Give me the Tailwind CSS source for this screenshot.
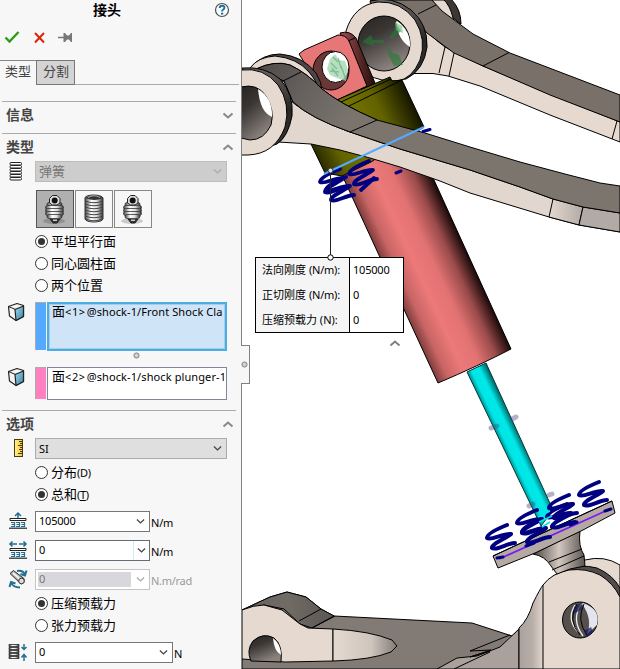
<!DOCTYPE html>
<html lang="zh-CN">
<head>
<meta charset="utf-8">
<title>接头</title>
<script src="https://cdn.jsdelivr.net/npm/@tailwindcss/browser@4"></script>
</head>
<body class="w-[620px] h-[669px] overflow-hidden bg-white flex text-black font-['Noto_Sans','Noto_Sans_CJK_SC',sans-serif] text-[11px] leading-none">
<svg class="absolute w-0 h-0" aria-hidden="true">
  <defs>
    <linearGradient id="metal"><stop offset="0" stop-color="#444"/><stop offset=".35" stop-color="#fff"/><stop offset=".65" stop-color="#ddd"/><stop offset="1" stop-color="#333"/></linearGradient>
    <linearGradient id="face" x1="0" y1="0" x2="1" y2="1"><stop offset="0" stop-color="#a8d8ea"/><stop offset="1" stop-color="#2f82a8"/></linearGradient>
    <radialGradient id="knob"><stop offset="0" stop-color="#ddd"/><stop offset="1" stop-color="#bbb"/></radialGradient>
    <symbol id="down" viewBox="0 0 12 8"><path d="M1.500 1.500 6 5.500l4.500-4" fill="none" stroke="currentColor" stroke-width="2"/></symbol>
    <symbol id="up" viewBox="0 0 12 8"><path d="M1.500 6.500 6 2.500l4.500 4" fill="none" stroke="currentColor" stroke-width="2"/></symbol>
    <symbol id="thin" viewBox="0 0 10 7"><path d="M1 1.200 5 5l4-3.800" fill="none" stroke="currentColor" stroke-width="1.400"/></symbol>
    <symbol id="cube" viewBox="0 0 18 20">
      <path d="M1.500 4.500 10 1.500l6.500 2V14.500L9 18.500 2.500 14Z" fill="#f4f4f4" stroke="#222" stroke-width="1.200" stroke-linejoin="round"/>
      <path d="M8 7.500 16.500 4v10.500L9 18.500Z" fill="url(#face)" stroke="#222" stroke-width="1.200" stroke-linejoin="round"/>
      <path d="M1.500 4.500l7 3" stroke="#222" fill="none"/>
    </symbol>
    <symbol id="hook" viewBox="0 0 38 38">
      <ellipse cx="18" cy="31" rx="11" ry="3" fill="#000" opacity=".18"/>
      <path d="M14 29h10l-3 4h-4Z" fill="#333" stroke="#222"/><path d="M17 29.500h4v1.500h-4Z" fill="#ccc"/>
      <g fill="url(#metal)" stroke="#333" stroke-width=".8"><rect x="11" y="12.500" width="15" height="4" rx="2"/><rect x="9.500" y="15.500" width="18" height="4" rx="2"/><rect x="9.500" y="18.500" width="18" height="4" rx="2"/><rect x="9.500" y="21.500" width="18" height="4" rx="2"/><rect x="11" y="24.500" width="15" height="4" rx="2"/></g>
      <path d="M13.500 13V8.500l3-3h4.500l3 3V13l-3 2h-4.500Z" fill="#ddd" stroke="#222"/><circle cx="18.700" cy="10.500" r="3" fill="#111"/>
    </symbol>
    <symbol id="coil" viewBox="0 0 38 38">
      <path d="M10 8c0-4 17-4 18 0v21c-1 4-17 4-18 0Z" fill="url(#metal)" stroke="#333"/>
      <path d="M10.500 8q9-6 17 0-8 4-17 0" fill="#333"/><path d="M13 7.500q6-3.500 12 0" fill="none" stroke="#aaa"/>
      <path d="M10 11q9 3.500 18 0M10 14q9 3.500 18 0M10 17q9 3.500 18 0M10 20q9 3.500 18 0M10 23q9 3.500 18 0M10 26q9 3.500 18 0M10 29q9 3.500 18 0" fill="none" stroke="#444"/>
    </symbol>
    <symbol id="ground" viewBox="0 0 18 12"><path d="M1 1.500h16v2H1z" fill="#fff" stroke="#222"/><path d="M2 5.500h3.500v4H2m.5-2h3M7 5.500h3.500v4H7m.5-2h3M12 5.500h3.500v4H12m.5-2h3" fill="none" stroke="#236f91" stroke-width="1.200"/><path d="M0 11.200h18" stroke="#222" stroke-width="1.200"/></symbol>
  </defs>
</svg>

<aside class="relative w-[242px] h-full shrink-0 bg-[#f7f7f7] border-r border-[#808080] flex flex-col z-10">
  <header class="h-[25px] flex items-start relative">
    <h1 class="w-[214px] text-center text-[14px] font-bold leading-[20px]">接头</h1>
    <svg class="w-[16px] h-[16px] mt-[2px] ml-0" viewBox="0 0 16 16"><circle cx="8" cy="8" r="6.500" fill="#f7fbfd" stroke="#4c5156" stroke-width="1.200"/><path d="M5.700 6q.2-2.300 2.400-2.300 2.300 0 2.300 2 0 1-1.200 1.800Q8.100 8.200 8.100 9.400" fill="none" stroke="#236f9b" stroke-width="1.900"/><path d="M7 10.700h2.200v1.900H7z" fill="#236f9b"/></svg>
  </header>
  <div class="h-[35px] pt-[4px] pl-[4px] flex items-start">
    <svg class="w-[72px] h-[16px]" viewBox="0 0 72 16"><path d="M1.500 8.500 5.500 12.500 14.500 3" fill="none" stroke="#2e9a12" stroke-width="2.300"/><path d="m31 4 9 9.500m0-9.500-9 9.500" stroke="#dc2408" stroke-width="2" fill="none"/><path d="M54 8.500h6" stroke="#777" stroke-width="1.500"/><path d="M59.500 4h1.500l2 2.500h2L67 4h1v9h-1l-2-2.500h-2L61 13h-1.500Z" fill="#777"/></svg>
  </div>
  <nav class="h-[25px] flex text-[13px] text-[#444] mr-[2px]">
    <div class="w-[36px] border-t border-[#888] pl-[5px] pt-[3px] leading-[15px] whitespace-nowrap">类型</div>
    <div class="w-[39px] border border-[#777] bg-[#d4d4d4] pl-[6px] pt-[3px] leading-[15px]">分割</div>
    <div class="flex-1 border-b border-[#aaa]"></div>
  </nav>
  <section class="h-[32px] mt-[16px] ml-[2px] mr-[5px] border-t border-[#aaa] flex justify-between items-start">
    <h2 class="text-[14px] font-bold text-[#444] leading-[18px] mt-[4px] ml-[4px]">信息</h2><svg class="w-[12px] h-[8px] mt-[10px] mr-[2px] text-[#888]"><use href="#down"/></svg>
  </section>
  <section class="h-[277px] flex flex-col">
    <div class="h-[28px] ml-[2px] mr-[5px] border-t border-[#aaa] flex justify-between items-start">
      <h2 class="text-[14px] font-bold text-[#444] leading-[18px] mt-[4px] ml-[4px]">类型</h2><svg class="w-[12px] h-[8px] mt-[9px] mr-[2px] text-[#888]"><use href="#up"/></svg>
    </div>
    <div class="flex h-[21px]">
      <svg class="w-[35px] h-[21px]" viewBox="0 0 35 21"><g fill="#fff" stroke="#222"><rect x="10" y="1.500" width="11.500" height="2.500" rx="1"/><rect x="10" y="4.500" width="11.500" height="2.500" rx="1"/><rect x="10" y="7.500" width="11.500" height="2.500" rx="1"/><rect x="10" y="10.500" width="11.500" height="2.500" rx="1"/><rect x="10" y="13.500" width="11.500" height="2.500" rx="1"/><rect x="10" y="16.500" width="11.500" height="2.500" rx="1"/></g></svg>
      <div class="w-[192px] border border-[#bcbcbc] bg-[#cdcdcd] flex items-center justify-between pl-[3px] pr-[4px] text-[13px] text-[#777]"><span>弹簧</span><svg class="w-[9px] h-[7px] text-[#aaa]"><use href="#thin"/></svg></div>
    </div>
    <div class="flex gap-[1px] pl-[36px] mt-[8px]">
      <div class="w-[38px] h-[38px] border border-[#555] bg-[#b0b0b0]"><svg class="w-[38px] h-[38px] -m-px"><use href="#hook"/></svg></div>
      <div class="w-[38px] h-[38px] border border-[#888]"><svg class="w-[38px] h-[38px] -m-px"><use href="#coil"/></svg></div>
      <div class="w-[38px] h-[38px] border border-[#888]"><svg class="w-[38px] h-[38px] -m-px"><use href="#hook"/></svg></div>
    </div>
    <div class="pl-[35px] mt-[2px] text-[13px]">
      <div class="h-[22px] flex items-center gap-[3px]"><i class="w-[13px] h-[13px] rounded-full border border-[#333] bg-white flex items-center justify-center"><b class="w-[7px] h-[7px] rounded-full bg-[#333]"></b></i><span>平坦平行面</span></div>
      <div class="h-[22px] flex items-center gap-[3px]"><i class="w-[13px] h-[13px] rounded-full border border-[#333] bg-white"></i><span>同心圆柱面</span></div>
      <div class="h-[22px] flex items-center gap-[3px]"><i class="w-[13px] h-[13px] rounded-full border border-[#333] bg-white"></i><span>两个位置</span></div>
    </div>
    <div class="flex h-[49px] mt-[6px]">
      <svg class="w-[18px] h-[20px] ml-[7px] mr-[10px]"><use href="#cube"/></svg>
      <div class="w-[11px] h-[48px] bg-[#55aaff] border border-[#aaa] border-r-0 border-b-0"></div>
      <div class="w-[180px] ml-[1px] border-2 border-[#4badE2] bg-[#d0e4f7] shadow-[inset_0_0_0_1px_#a5cdec] pl-[3px] leading-[14px] whitespace-nowrap overflow-hidden"><span class="text-[13px]">面</span><span class="tracking-[0.6px]">&lt;1&gt;</span><span class="tracking-[0.100px] ml-[1px]">@shock-1/Front Shock Cla</span></div>
    </div>
    <div class="h-[16px] pl-[133px] pt-[1px]"><svg class="w-[7px] h-[7px]" viewBox="0 0 7 7"><circle cx="3.500" cy="3.500" r="2.600" fill="url(#knob)" stroke="#888"/></svg></div>
    <div class="flex h-[33px]">
      <svg class="w-[18px] h-[20px] ml-[7px] mr-[10px]"><use href="#cube"/></svg>
      <div class="w-[11px] h-[32px] bg-[#ff80c0] border border-[#aaa] border-r-0 border-b-0"></div>
      <div class="w-[180px] ml-[1px] border border-[#81859b] bg-white pl-[4px] pt-px leading-[14px] whitespace-nowrap overflow-hidden"><span class="text-[13px]">面</span><span class="tracking-[0.6px]">&lt;2&gt;</span><span class="tracking-[0.100px] ml-[1px]">@shock-1/shock plunger-1</span></div>
    </div>
  </section>
  <section class="flex flex-col">
    <div class="h-[28px] ml-[2px] mr-[5px] border-t border-[#aaa] flex justify-between items-start">
      <h2 class="text-[14px] font-bold text-[#444] leading-[18px] mt-[4px] ml-[4px]">选项</h2><svg class="w-[12px] h-[8px] mt-[9px] mr-[2px] text-[#888]"><use href="#up"/></svg>
    </div>
    <div class="flex h-[21px]">
      <svg class="w-[35px] h-[21px]" viewBox="0 0 35 21"><defs><linearGradient id="gold"><stop offset="0" stop-color="#fff19b"/><stop offset="1" stop-color="#f8c928"/></linearGradient></defs><rect x="14.500" y="1.500" width="8" height="17" fill="url(#gold)" stroke="#4a3a10"/><path d="M22 3.500h-3M22 5.500h-2M22 7.500h-4M22 9.500h-2M22 11.500h-3M22 13.500h-2M22 15.500h-4" stroke="#4a3a10"/></svg>
      <div class="w-[192px] border border-[#acacac] bg-[#dfdfdf] flex items-center justify-between pl-[3px] pr-[4px]"><span>SI</span><svg class="w-[9px] h-[7px] text-[#444]"><use href="#thin"/></svg></div>
    </div>
    <div class="pl-[35px] mt-[2px] text-[13px]">
      <div class="h-[22px] flex items-center gap-[3px]"><i class="w-[13px] h-[13px] rounded-full border border-[#333] bg-white"></i><span class="whitespace-nowrap">分布<span class="text-[11px] tracking-[-0.300px]">(D)</span></span></div>
      <div class="h-[22px] flex items-center gap-[3px]"><i class="w-[13px] h-[13px] rounded-full border border-[#333] bg-white flex items-center justify-center"><b class="w-[7px] h-[7px] rounded-full bg-[#333]"></b></i><span class="whitespace-nowrap">总和<span class="text-[11px] tracking-[-0.300px]">(<u>T</u>)</span></span></div>
    </div>
    <div class="flex h-[21px] mt-[6px]">
      <svg class="w-[35px] h-[21px]" viewBox="0 0 35 21"><path d="M18 7V2.500m-3 2.500 3-3 3 3" fill="none" stroke="#236f91" stroke-width="1.500"/><use href="#ground" x="9" y="6" width="18" height="12"/></svg>
      <div class="w-[115px] border border-[#777] bg-white flex items-center justify-between pl-[3px] pr-[4px]"><span class="-mt-[2px] tracking-[-0.200px]">105000</span><svg class="w-[9px] h-[7px] text-[#444]"><use href="#thin"/></svg></div><span class="ml-[1px] mt-[6px] tracking-[-0.200px]">N/m</span>
    </div>
    <div class="flex h-[21px] mt-[8px]">
      <svg class="w-[35px] h-[21px]" viewBox="0 0 35 21"><path d="M10 4h7m2 0h7M12.500 1.500 10 4l2.500 2.500M23.500 1.500 26 4l-2.500 2.500" fill="none" stroke="#236f91" stroke-width="1.600"/><use href="#ground" x="9" y="7" width="18" height="12"/></svg>
      <div class="w-[115px] border border-[#626d75] bg-white flex items-center justify-between pl-[3px]"><span class="-mt-[2px]">0</span><span class="w-[16px] h-full border-l border-[#cceef5] flex items-center pl-[3px]"><svg class="w-[9px] h-[7px] text-[#444]"><use href="#thin"/></svg></span></div><span class="ml-[1px] mt-[6px] tracking-[-0.200px]">N/m</span>
    </div>
    <div class="flex h-[21px] mt-[8px] text-[#999]">
      <svg class="w-[35px] h-[21px]" viewBox="0 0 35 21"><path d="M10 4.500 13.500 1.500 24 9.500q1 5-3 5.500Z" fill="#aaa" stroke="#333"/><path d="m13 4 8 7" stroke="#f3f3f3" stroke-width="2.200"/><circle cx="21.500" cy="12" r="2.800" fill="#ddd" stroke="#333"/><path d="M17 2q6-1 8 3.500m1.500-4L25 6.500 20.500 5M20 18.500q-7 0-9-5m-1.500 4.500 1.500-5 4.500 1.500" fill="none" stroke="#236f91" stroke-width="2"/></svg>
      <div class="w-[115px] border border-[#c4c4c4] bg-white flex items-center justify-between pl-[2px] pr-[4px]"><span class="w-[93px] h-[15px] bg-[#d8d8dc] text-[#777] pl-[1px] leading-[14px]">0</span><svg class="w-[9px] h-[7px] text-[#aaa]"><use href="#thin"/></svg></div><span class="ml-[1px] mt-[6px] tracking-[-0.300px]">N.m/rad</span>
    </div>
    <div class="pl-[35px] mt-[2px] text-[13px]">
      <div class="h-[22px] flex items-center gap-[3px]"><i class="w-[13px] h-[13px] rounded-full border border-[#333] bg-white flex items-center justify-center"><b class="w-[7px] h-[7px] rounded-full bg-[#333]"></b></i><span>压缩预载力</span></div>
      <div class="h-[22px] flex items-center gap-[3px]"><i class="w-[13px] h-[13px] rounded-full border border-[#333] bg-white"></i><span>张力预载力</span></div>
    </div>
    <div class="flex h-[21px] mt-[6px]">
      <svg class="w-[35px] h-[21px]" viewBox="0 0 35 21"><g fill="url(#metal)" stroke="#222" stroke-width=".8"><path d="M9 2.500h10v2H9zm0 3h10v2H9zm0 3h10v2H9zm0 3h10v2H9zm0 3h10v2H9z"/></g><path d="M24 2v5m-2.500-2L24 7.500 26.500 5M24 19v-6m-2.500 2.500L24 12.500l2.500 3" stroke="#236f91" stroke-width="1.500" fill="none"/></svg>
      <div class="w-[138px] border border-[#777] bg-white flex items-center justify-between pl-[3px] pr-[4px]"><span class="-mt-[2px]">0</span><svg class="w-[9px] h-[7px] text-[#444]"><use href="#thin"/></svg></div><span class="ml-[1px] mt-[6px]">N</span>
    </div>
  </section>
  <div class="absolute left-[241px] top-[345px] w-[9px] h-[39px] bg-[#f7f7f7] border border-[#808080] border-l-0 flex items-center"><svg class="w-[7px] h-[7px]" viewBox="0 0 7 7"><circle cx="3.500" cy="3.500" r="2.600" fill="url(#knob)" stroke="#888"/></svg></div>
</aside>

<main class="relative flex-1 overflow-hidden">
  <svg class="block w-[378px] h-[669px]" viewBox="242 0 378 669" stroke-linejoin="round">
    <defs>
      <linearGradient id="olive" gradientUnits="userSpaceOnUse" x1="325" y1="173" x2="424" y2="127"><stop offset="0" stop-color="#2b2b00"/><stop offset=".2" stop-color="#636300"/><stop offset=".45" stop-color="#747400"/><stop offset=".7" stop-color="#626200"/><stop offset="1" stop-color="#151500"/></linearGradient>
      <linearGradient id="pink" gradientUnits="userSpaceOnUse" x1="437" y1="383" x2="511" y2="349"><stop offset="0" stop-color="#7a3a3a"/><stop offset=".15" stop-color="#c96565"/><stop offset=".36" stop-color="#ed7979"/><stop offset=".58" stop-color="#e27272"/><stop offset=".8" stop-color="#9b4b4b"/><stop offset="1" stop-color="#1c0a0a"/></linearGradient>
      <linearGradient id="cyan" gradientUnits="userSpaceOnUse" x1="501" y1="446" x2="522" y2="436"><stop offset="0" stop-color="#007a7a"/><stop offset=".25" stop-color="#00e5e5"/><stop offset=".6" stop-color="#00e8e8"/><stop offset="1" stop-color="#004b4b"/></linearGradient>
      <linearGradient id="lug"><stop offset="0" stop-color="#9d4e4e"/><stop offset="1" stop-color="#250d0d"/></linearGradient>
      <linearGradient id="bore" x1="0" y1="0" x2=".5" y2="1"><stop offset="0" stop-color="#262321"/><stop offset=".4" stop-color="#393634"/><stop offset="1" stop-color="#8a827d"/></linearGradient>
      <linearGradient id="arm" gradientUnits="userSpaceOnUse" x1="250" y1="65" x2="345" y2="125"><stop offset="0" stop-color="#4b4745"/><stop offset=".5" stop-color="#65605d"/><stop offset="1" stop-color="#7a746d"/></linearGradient>
      <linearGradient id="bend"><stop offset="0" stop-color="#e5d9d0"/><stop offset="1" stop-color="#b2aaa4"/></linearGradient>
      <linearGradient id="pocket"><stop offset="0" stop-color="#e5d9d0"/><stop offset=".6" stop-color="#cfc5bd"/><stop offset="1" stop-color="#837a75"/></linearGradient>
      <linearGradient id="neck"><stop offset="0" stop-color="#4b4643"/><stop offset=".5" stop-color="#d3c7bf"/><stop offset="1" stop-color="#5b5450"/></linearGradient>
      <linearGradient id="corner"><stop offset="0" stop-color="#aaa19d"/><stop offset=".35" stop-color="#b8aea8"/><stop offset=".6" stop-color="#ddd1c9"/><stop offset="1" stop-color="#e5d9d0"/></linearGradient>
      <linearGradient id="hump"><stop offset="0" stop-color="#67625e"/><stop offset=".5" stop-color="#716b66"/><stop offset="1" stop-color="#5b5652"/></linearGradient>
      <linearGradient id="rim" x1="0" y1="0" x2="0" y2="1"><stop offset="0" stop-color="#6b6562"/><stop offset=".5" stop-color="#272524"/><stop offset="1" stop-color="#3a3634"/></linearGradient>
      <path id="spring" d="M22 1C12 5 2 10 2 14 6 17 18 9 26 10 22 14 6 20 7 24 12 27 22 19 30 19"/>
    </defs>

    <!-- upper arm -->
    <g stroke="#000" stroke-width="1">
      <path d="M425 0h21q12 9 14 25L425 14Z" fill="#e5d9d0"/>
      <path d="M443-1h8q10 10 10 25l-8-6Q450 5 443-1Z" fill="#3a3735"/>
      <path d="M418 20Q427 34 445 47L483 66 550 94 620 122V142L550 115 480 86 448 76 433 73.500H395Z" fill="#e5d9d0"/>
      <path d="M370 0H432L442 11 473 34 510 53 620 95V122L550 95 483 66 454 53 427 33 405 6Z" fill="#797169"/>
      <path d="M509 52.500 483 66M436 5 418 14M445 47 439 73M454 53 449 76M617 121 612 139" fill="none"/>
      <path d="M370 1Q392-5 411 10 428 24 427 47 424 70 406 79L388 81Z" fill="url(#rim)"/>
      <path d="M346 31Q354 5 378 2 401 1 415 20 427 40 420 60 412 79 397 81 363 82 350 55 346 43 346 31Z" fill="#e5d9d0"/>
      <ellipse cx="384" cy="43.500" rx="26" ry="27.500" fill="url(#bore)"/>
    </g>
    <path d="M397 21Q411 31 410 47 398 40 396 22Z" fill="#fff"/>
    <path d="m362 42 9-7 2 5 11 0v3h-11l1 3ZM387 44l5 9 7 2 4 10-9 1-5-10ZM389 38l6-9 0-7 6 9-8 7Z" fill="#257b35" opacity=".6"/>
    <path d="m395 22 7 4 1 7-7-3Z" fill="#68bd7c" opacity=".6"/>

    <!-- eye bracket -->
    <g stroke="#000">
      <path d="M340 33Q350 30 356 38L375 83 362 90 345 44Z" fill="url(#lug)"/>
      <path d="M299 54 304 50 338 35Q346 35 349 41L367 86 337 100 322 91Z" fill="#e77777"/>
      <path d="M348 41 355 38" fill="none"/>
      <ellipse cx="331" cy="70.500" rx="18" ry="19.500" fill="#683838"/>
      <ellipse cx="335.500" cy="67" rx="13.500" ry="15.500" fill="#fff"/>
    </g>
    <path d="m327 69 3-10 5-5 4 6 6 1 3 9-2 11-9-3-7-3Z" fill="#9ed5ac" opacity=".75"/><path d="m331 63 6 6m1-11 3 10m-9 0 6 8m3-10 4 11m-15-6 9 1m-6-15 5 5" stroke="#62a873" stroke-width="1.500" opacity=".6"/>

    <!-- collar and body -->
    <g stroke="#000">
      <path d="M342 175 371 150 422 150 434 180 511 349Q478 366 438 383Z" fill="url(#pink)"/>
      <path d="M337 100 390 77 392 81 402 80 424 127 371 162 342 176 325 173 311 144Z" fill="url(#olive)"/>
      <path d="M349 106 402 80M341 102 391 79" fill="none"/>
    </g>

    <!-- lower arm -->
    <g stroke="#000">
      <path d="M250 68Q262 54 280 54 303 56 316 73 322 82 322 92L300 100 260 80Z" fill="#4b4643"/>
      <path d="M250 68Q258 57 275 56 297 58 309 72 318 83 319 91L290 90Z" fill="#e5d9d0"/>
      <path d="M287 97Q300 112 350 132L400 149 470 170 520 187 553 199 583 207 620 213V232L579 225 549 217 470 193 440 181 400 167 370 158 340 150 311 144 278 142Z" fill="#e2d7ce"/>
      <path d="M553 199 583 207 579 225 549 217Z" fill="url(#bend)"/><path d="M583 207 620 213V232L579 225Z" fill="#b2aaa4"/>
      <path d="M256 69Q275 60 290 65 307 73 322 89 340 104 377 120L425 133 470 147 520 162 565 174 600 183 620 186V213L583 207 553 199 520 187 470 170 400 149 350 132Q310 118 293 102L284 81Z" fill="#7c756e"/>
      <path d="M256 69Q275 60 290 65 307 73 322 89 340 104 377 120L350 132Q310 118 293 102L284 81Z" fill="url(#arm)"/>
      <path d="M301 72 281 82" fill="none"/>
      <path d="M242 68Q265 66 280 79 294 94 292 116 288 137 277 144L260 150Z" fill="url(#rim)"/>
      <path d="M241 70Q264 67 278 85 291 104 285 127 275 154 248 155H241Z" fill="#e5d9d0"/>
      <path d="M241 87Q257 83 266 96 275 110 271 125 264 140 250 140L241 138Z" fill="url(#bore)"/>
      <path d="M258 89Q273 98 272 117 260 112 258 89Z" fill="#fff" stroke="none"/>
    </g>

    <!-- spring symbols under the collar -->
    <g fill="none" stroke="#000080" stroke-width="3.800" stroke-linecap="round">
      <use href="#spring" x="318" y="168"/><use href="#spring" x="324" y="176"/><use href="#spring" x="347" y="160"/>
      <path d="M374 178 361 190"/>
      <path d="m396 173 5-2M423 131.500l7-2" stroke-width="3"/>
    </g>
    <path d="m324 174 100-47" stroke="#55aaff" stroke-width="2"/>

    <!-- rod -->
    <path d="M467 372 486 363 553 510 541 526Z" fill="url(#cyan)" stroke="#003838"/>
    <g stroke-width="5" stroke-linecap="round" opacity=".42" stroke="#4a4a88"><path d="m491 428 6-2M512 419l4-2M529 506l4-2M549 495l3-1"/></g>

    <!-- base plates -->
    <g stroke="#000">
      <path d="M242 610 270 597 287 592 306 597 321 609 334 616 472 623 512 636 520 628V669H242Z" fill="#827a75"/>
      <path d="M242 610 270 597 287 592 306 597 321 609 334 616 312 628 300 624 284 609 264 605Z" fill="url(#hump)"/>
      <path d="M321 609 299 621M335 616 312 628" fill="none"/>
      <path d="M242 610Q254 605 264 605L282 610 300 624 308 628 333 629 333 661 285 662 242 659Z" fill="#e5d9d0"/>
      <path d="M333 629Q370 631 392 640L397 646 391 652Q371 660 333 661Z" fill="url(#pocket)"/>
      <path d="M251 661Q246 650 253 641 263 632 274 638 283 645 281 662Z" fill="url(#bore)"/>
      <path d="M273 638Q281 644 281 655 274 651 273 638Z" fill="#fff" stroke="none"/>
      <path d="M437 669 457 658 477 656 500 647 519 629V669Z" fill="#aaa19d"/>
      <path d="M470 651 510 635M470 651l21-1-21 7 20-6M454 669l36-17" fill="none"/>
    </g>

    <!-- clevis -->
    <g stroke="#000">
      <path d="M585 560Q604 555 620 565V600L575 567Z" fill="#e5d9d0"/>
      <path d="M560 572Q580 563 597 568 613 575 620 588V599L602 578Z" fill="#514c49"/>
      <path d="M519 669V628Q528 620 533 603 540 589 543 585L557 574V669Z" fill="url(#corner)"/>
      <path d="M543 669V585Q552 573 569 570 586 568 600 575 613 583 620 597V669Z" fill="#e5d9d0"/>
      <ellipse cx="580" cy="620" rx="17.500" ry="18" fill="#56504d"/>
      <path d="M583 603Q601 609 597 625L587 634Q593 619 582 604Z" fill="#e4e4ef" stroke="none"/>
      <path d="M575 605Q566 619 578 632M581 604Q571 620 583 636" fill="none" stroke="#eee" stroke-width="1.300"/>
      <path d="M577 604Q567 620 580 635M584 604Q576 620 587 635" fill="none"/>
      <path d="m584 631 7-4 2 5-7 5ZM574 607l7-4 1 6-8 5Z" fill="#14145a" stroke="none" opacity=".7"/>
    </g>

    <!-- flange -->
    <g stroke="#000">
      <path d="M533 554 580 531Q578 546 584 555L585 566 570 569 557 574 551 566Q545 556 533 554Z" fill="url(#neck)"/>
      <path d="M549 562 582 549M552 570 584 556" fill="none"/>
      <path d="M493 556 612 501 615 513 583 530 535 553 498 568Z" fill="#b5aaa3"/>
      <path d="M493 556 612 501" fill="none"/>
    </g>
    <path d="m499 559 111-50" stroke="#7b1cf0" stroke-width="1.800"/>
    <g fill="none" stroke="#000080" stroke-width="4" stroke-linecap="round">
      <use href="#spring" x="485" y="524"/>
      <use href="#spring" x="515" y="509"/><use href="#spring" x="520" y="518"/>
      <use href="#spring" x="547" y="494"/><use href="#spring" x="545" y="503"/>
      <use href="#spring" x="577" y="481"/>
      <path d="m497 558 6-1M526 546l8-3M570 525l7-3M605 511l6-2" stroke-width="3"/>
    </g>
    <path d="m538 517 12-6m-11 11 13-6m-10 11 8-5" stroke="#00e8e8" stroke-width="1.500"/>

    <!-- callout leader -->
    <path d="M330.500 171v86" stroke="#222"/><circle cx="330.500" cy="170.500" r="2.500" fill="#ddd" stroke="#333"/>
  </svg>

  <div class="absolute left-[13px] top-[257px] w-[149px] h-[76px] border border-black bg-white flex leading-[25px] text-[11px]">
    <div class="w-[94px] -mt-px pt-0 bg-[#f5f5f5] border-r border-t border-black pl-[6px] whitespace-nowrap">
      <div class="-mt-px">法向刚度 <span class="tracking-[-0.200px]">(N/m):</span></div><div>正切刚度 <span class="tracking-[-0.200px]">(N/m):</span></div><div>压缩预载力 (N):</div>
    </div>
    <div class="-mt-px pl-[3px] tracking-[-0.200px]"><div>105000</div><div>0</div><div>0</div></div>
  </div>
  <svg class="absolute left-[85px] top-[253px] w-[8px] h-[8px]" viewBox="0 0 8 8"><circle cx="3.500" cy="4.500" r="2.700" fill="#fff" stroke="#000"/></svg>
  <svg class="absolute left-[147px] top-[339px] w-[12px] h-[8px] text-[#808080]"><use href="#up"/></svg>
</main>
</body>
</html>
